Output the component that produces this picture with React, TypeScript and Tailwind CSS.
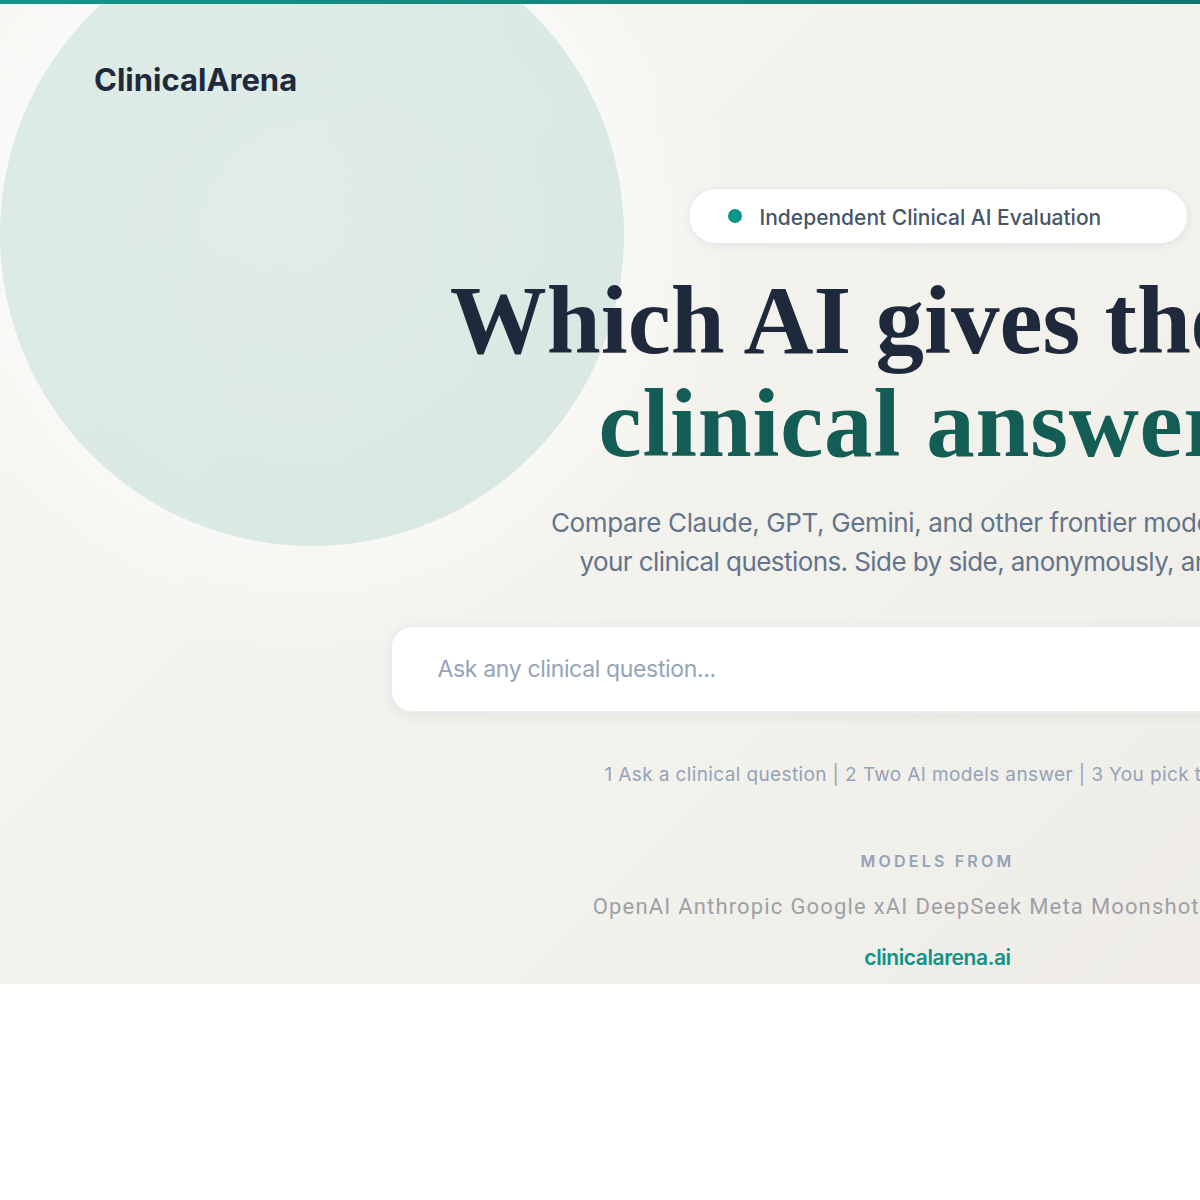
import React from "react";

// Provider names shown under "Models from"
const providers = ["OpenAI", "Anthropic", "Google", "xAI", "DeepSeek", "Meta", "Moonshot", "Mistral"];

const App: React.FC = () => {
  return (
    <div className="w-[1875px] bg-white">
      <section className="relative h-[984px] overflow-hidden bg-[linear-gradient(135deg,#f6f6f3_0%,#f2f1ec_50%,#ece8e1_100%)] font-['Inter',sans-serif]">
        {/* Decorative circle */}
        <div className="absolute left-0 top-[-78px] h-[624px] w-[624px] rounded-full bg-[radial-gradient(circle,rgba(13,148,136,0.09)_0%,rgba(13,148,136,0.11)_70%,rgba(13,148,136,0.105)_100%)] shadow-[0_0_120px_40px_rgba(255,255,255,0.55)]" />

        {/* Top accent bar */}
        <div className="relative h-1 w-full bg-[linear-gradient(90deg,#13968a,#11655b)]" />

        {/* Header */}
        <header className="relative px-[94px] pt-[58px]">
          <div className="text-[31px] font-bold leading-[36px] text-[#1e293b]">ClinicalArena</div>
        </header>

        {/* Hero */}
        <main className="relative flex flex-col items-center">
          <div className="mt-[90px] flex h-[56px] w-[500px] items-center gap-[18px] rounded-full border border-[#e5e9f0] bg-white pl-[39px] shadow-[0_2px_8px_rgba(15,23,42,0.06)]">
            <span className="h-[14px] w-[14px] rounded-full bg-[#0d9488]" />
            <span className="pt-[3px] text-[21px] font-medium text-[#475569]">Independent Clinical AI Evaluation</span>
          </div>

          <h1 className="mt-[25px] text-center font-['Liberation_Serif',serif] text-[97px] font-bold leading-[103px] text-[#1e293b]">
            Which AI gives the best
            <br />
            <span className="tracking-[0.008em] text-[#135d55]">clinical answer?</span>
          </h1>

          <p className="mt-[28px] text-center text-[26px] leading-[39px] text-[#64748b]">
            <span className="tracking-[-0.014em]">Compare Claude, GPT, Gemini, and other frontier models against</span>
            <br />
            <span className="tracking-[-0.022em]">your clinical questions. Side by side, anonymously, and blind.</span>
          </p>

          <div className="mt-[44px] flex h-[88px] w-[1096px] items-center rounded-[22px] border-2 border-[#e8edf4] bg-white pl-[46px] shadow-[0_4px_14px_rgba(15,23,42,0.06)]">
            <span className="text-[23px] tracking-[-0.015em] text-[#94a3b8]">Ask any clinical question...</span>
          </div>

          <div className="mt-[48px] text-[19px] leading-[28px] tracking-[0.02em] text-[#94a3b8]">
            1 Ask a clinical question | 2 Two AI models answer | 3 You pick the best
          </div>

          <div className="mt-[62px] text-[16px] font-semibold leading-[20px] tracking-[0.2em] text-[#94a3b8]">MODELS FROM</div>

          <div className="mt-[22px] flex gap-[7px] font-['Roboto',sans-serif] text-[22px] leading-[28px] tracking-[0.052em] text-[#9ea0a8]">
            {providers.map((p) => (
              <span key={p}>{p}</span>
            ))}
          </div>

          <div className="mt-[23px] text-[21px] font-semibold leading-[28px] tracking-[-0.02em] text-[#0d9488]">clinicalarena.ai</div>
        </main>
      </section>
    </div>
  );
};

export default App;
